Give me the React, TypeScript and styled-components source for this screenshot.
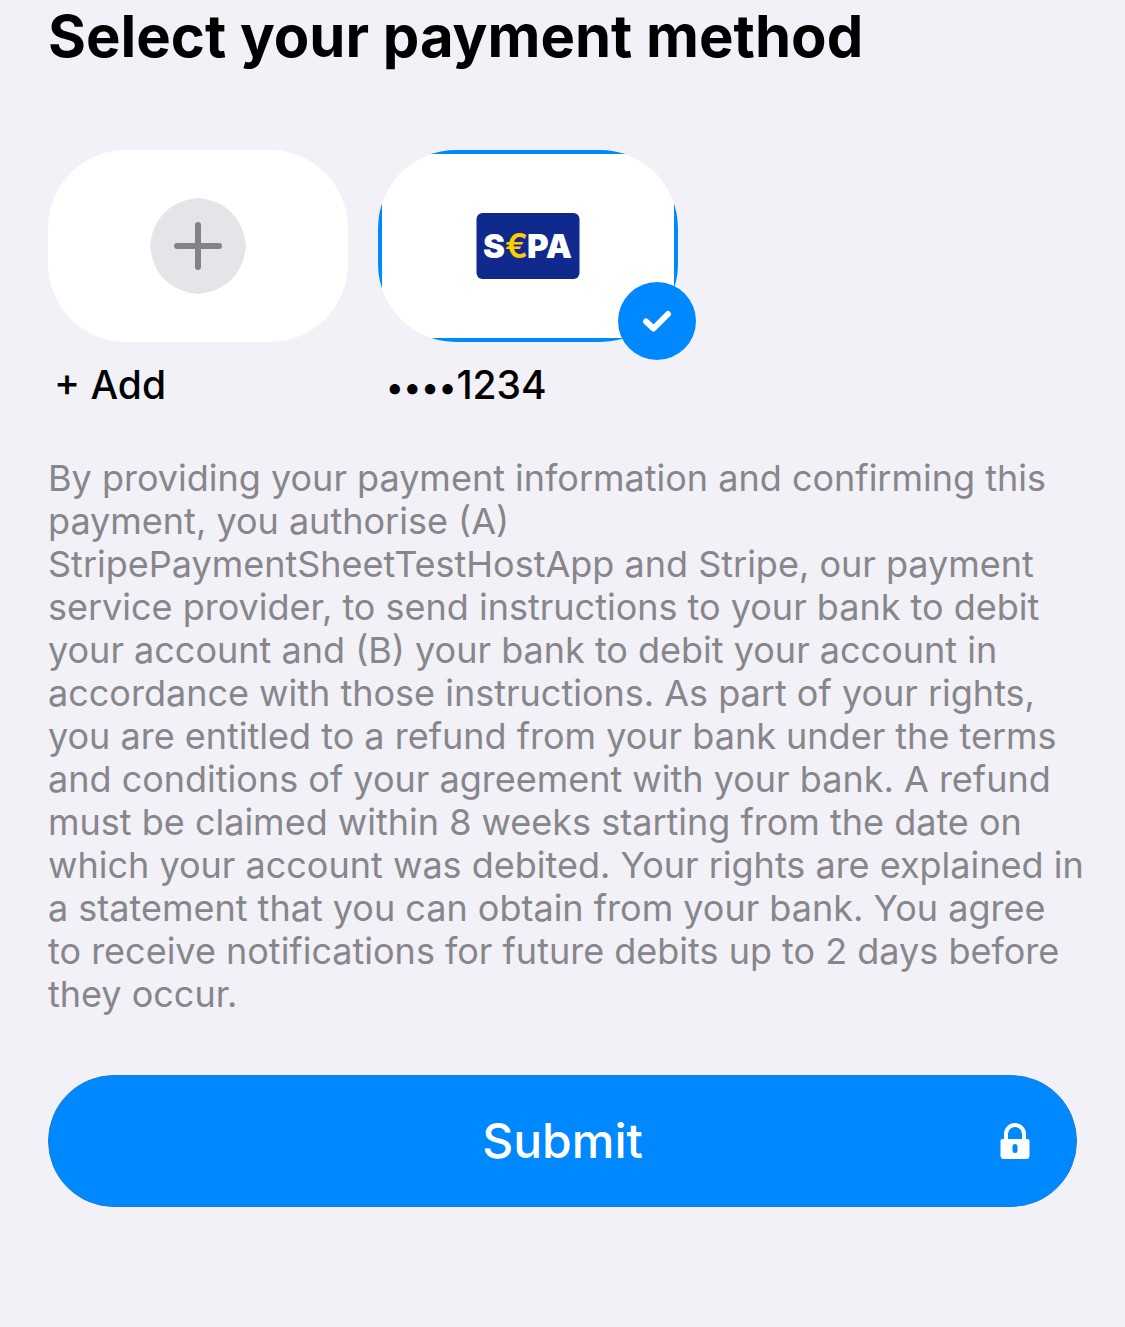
import React from "react";
import styled, { createGlobalStyle, css } from "styled-components";

const color = {
  page: "#f2f1f7",
  surface: "#ffffff",
  text: "#000000",
  muted: "#86868b",
  circle: "#e5e4e9",
  plus: "#838287",
  primary: "#0088ff",
  primaryEdge: "#167cda",
  sepaBlue: "#10298d",
  sepaYellow: "#ffcc00",
};

const GlobalStyle = createGlobalStyle`
  *, *::before, *::after {
    box-sizing: border-box;
  }
  body {
    margin: 0;
    background: ${color.page};
    color: ${color.text};
    font-family: Inter, "Liberation Sans", sans-serif;
  }
`;

const Sheet = styled.main`
  display: flex;
  flex-direction: column;
  padding: 0 48px 120px;
`;

const Title = styled.h1`
  margin: 0 0 78px;
  font-size: 58px;
  line-height: 72px;
  font-weight: 700;
`;

const Methods = styled.div`
  display: flex;
  gap: 30px;
  margin-bottom: 49px;
`;

const Method = styled.button`
  display: flex;
  flex-direction: column;
  gap: 19px;
  width: 300px;
  padding: 0;
  border: 0;
  background: none;
  color: inherit;
  font: inherit;
  text-align: left;
  cursor: pointer;
`;

const TileFrame = styled.span`
  position: relative;
  display: block;
  width: 100%;
`;

const Tile = styled.span`
  display: block;
  height: 192px;
  border-radius: 78px;
  overflow: hidden;
  background: ${color.surface};
`;

const TileFace = styled.span<{ $selected?: boolean }>`
  display: flex;
  align-items: center;
  justify-content: center;
  height: 100%;
  ${({ $selected }) =>
    $selected &&
    css`
      border: 4px solid ${color.primary};
    `}
`;

const Badge = styled.span`
  position: absolute;
  right: -18px;
  bottom: -18px;
  display: flex;
  align-items: center;
  justify-content: center;
  width: 78px;
  height: 78px;
  border-radius: 50%;
  background: ${color.primary};
`;

const MethodLabel = styled.span`
  padding: 0 6px;
  font-size: 39px;
  line-height: 47px;
  font-weight: 500;
`;

const MaskDots = styled.span`
  padding-left: 2px;
  font-size: 33px;
  line-height: 1;
`;

const Terms = styled.p`
  margin: 0 -8px 59px 0;
  color: ${color.muted};
  font-size: 36px;
  line-height: 43px;
`;

const SubmitButton = styled.button`
  display: grid;
  grid-template-columns: 1fr auto 1fr;
  align-items: center;
  width: 100%;
  height: 132px;
  padding: 0 46px;
  border: 1px solid ${color.primaryEdge};
  border-radius: 66px;
  background: ${color.primary};
  color: #ffffff;
  font: inherit;
  font-size: 48px;
  line-height: 58px;
  font-weight: 500;
  cursor: pointer;
`;

const SubmitLabel = styled.span`
  grid-column: 2;
`;

const LockIcon = styled.svg`
  grid-column: 3;
  justify-self: end;
`;

function AddIcon() {
  return (
    <svg width="96" height="96" viewBox="0 0 96 96" aria-hidden="true">
      <path
        d="M48 0C76 3 93 20 96 48C93 76 76 93 48 96C20 93 3 76 0 48C3 20 20 3 48 0Z"
        fill={color.circle}
      />
      <circle cx="48" cy="48" r="47" fill={color.circle} />
      <path
        d="M48 27V69M27 48H69"
        stroke={color.plus}
        strokeWidth="6"
        strokeLinecap="round"
      />
    </svg>
  );
}

function SepaLogo() {
  return (
    <svg width="104" height="66" viewBox="0 0 104 66" role="img" aria-label="SEPA">
      <rect x="0.5" width="103" height="66" rx="6" fill={color.sepaBlue} />
      <g fontFamily="Inter, sans-serif" fontWeight="900" fontSize="33">
        <text x="7" y="45" fill="#fff">S</text>
        <text x="29" y="45" fill={color.sepaYellow} fontWeight="600" fontSize="34">€</text>
        <text x="51" y="45" fill="#fff">PA</text>
      </g>
    </svg>
  );
}

function CheckIcon() {
  return (
    <svg width="30" height="22" viewBox="0 0 30 22" fill="none" aria-hidden="true">
      <path
        d="M4 11.5L11.5 18.5L26 4"
        stroke="#fff"
        strokeWidth="6"
        strokeLinecap="round"
        strokeLinejoin="round"
      />
    </svg>
  );
}

export default function App() {
  return (
    <>
      <GlobalStyle />
      <Sheet>
        <Title>Select your payment method</Title>
        <Methods>
          <Method type="button">
            <TileFrame>
              <Tile>
                <TileFace>
                  <AddIcon />
                </TileFace>
              </Tile>
            </TileFrame>
            <MethodLabel>+ Add</MethodLabel>
          </Method>
          <Method type="button" aria-pressed="true">
            <TileFrame>
              <Tile>
                <TileFace $selected>
                  <SepaLogo />
                </TileFace>
              </Tile>
              <Badge>
                <CheckIcon />
              </Badge>
            </TileFrame>
            <MethodLabel>
              <MaskDots>••••</MaskDots>1234
            </MethodLabel>
          </Method>
        </Methods>
        <Terms>
          By providing your payment information and confirming this payment, you
          authorise (A) StripePaymentSheetTestHostApp and Stripe, our payment
          service provider, to send instructions to your bank to debit your
          account and (B) your bank to debit your account in accordance with
          those instructions. As part of your rights, you are entitled to a
          refund from your bank under the terms and conditions of your agreement
          with your bank. A refund must be claimed within 8 weeks starting from
          the date on which your account was debited. Your rights are explained
          in a statement that you can obtain from your bank. You agree to receive
          notifications for future debits up to 2 days before they occur.
        </Terms>
        <SubmitButton type="submit">
          <SubmitLabel>Submit</SubmitLabel>
          <LockIcon width="30" height="36" viewBox="0 0 30 36" aria-hidden="true">
            <path
              d="M6 18V11a9 9 0 0 1 18 0V18"
              fill="none"
              stroke="#fff"
              strokeWidth="4"
            />
            <path
              fill="#fff"
              fillRule="evenodd"
              d="M2 16H28Q29.500 16 29.500 18V32.500Q29.500 36 26 36H4Q0.500 36 0.500 32.500V18Q0.500 16 2 16ZM15 21a2.500 2.500 0 0 0-2.500 2.500v4a2.500 2.500 0 0 0 5 0v-4A2.500 2.500 0 0 0 15 21Z"
            />
          </LockIcon>
        </SubmitButton>
      </Sheet>
    </>
  );
}
